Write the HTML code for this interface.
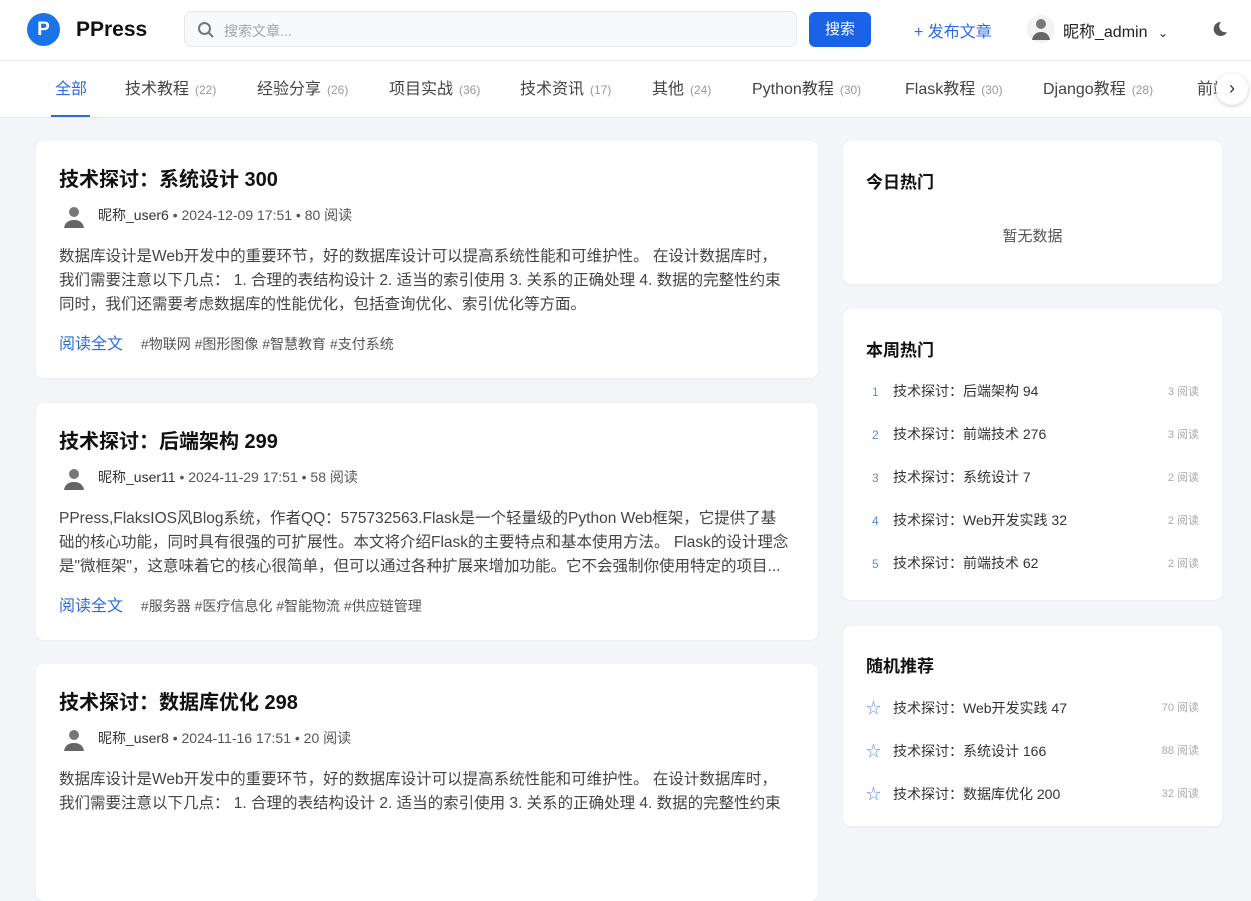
<!DOCTYPE html>
<html><head><meta charset="utf-8"><style>
*{box-sizing:border-box;margin:0;padding:0}
body{width:1251px;height:800px;overflow:hidden;background:#f3f5f8;font-family:"Liberation Sans","Noto Sans CJK SC",sans-serif;color:#1f2329}
.hdr{position:absolute;left:0;top:0;width:1251px;height:61px;background:#fff;border-bottom:1px solid #e8eaed}
.logo{position:absolute;left:27px;top:13px;width:33px;height:33px;border-radius:50%;background:#1a73e8;color:#fff;font-weight:bold;font-size:19px;text-align:center;line-height:33px}
.brand{position:absolute;left:76px;top:18px;font-size:21px;font-weight:bold;color:#111}
.search{position:absolute;left:184px;top:11px;width:613px;height:36px;border:1px solid #e6e8eb;border-radius:8px;background:#f8f9fb}
.search span{position:absolute;left:39px;top:9px;font-size:14px;color:#a0a4aa}
.btn{position:absolute;left:809px;top:12px;width:62px;height:35px;background:#1a62e6;border-radius:6px;color:#fff;font-size:15px;text-align:center;line-height:35px}
.pub{position:absolute;left:914px;top:18px;font-size:16px;color:#2b6de0}
.user{position:absolute;left:1063px;top:18px;font-size:16px;color:#222}
.tabs{position:absolute;left:0;top:61px;width:1251px;height:57px;background:#fff;border-bottom:1px solid #e8eaed}
.tab{position:absolute;top:14px;font-size:16px;color:#444;white-space:nowrap}
.tab small{font-size:12px;color:#999;margin-left:6px}
.card{position:absolute;background:#fff;border-radius:8px;box-shadow:0 1px 3px rgba(0,0,0,.04)}
.art{left:36px;width:782px;height:237px}
.art h2{position:absolute;left:23px;top:22px;font-size:20px;font-weight:bold;color:#111}
.meta{position:absolute;left:62px;top:64px;font-size:14px;color:#555}
.meta .n{color:#333}
.av{position:absolute;left:26px;top:63px;width:24px;height:26px}
.body{position:absolute;left:23px;top:104px;width:750px;font-size:15.5px;line-height:24px;color:#444;white-space:nowrap;overflow:hidden}
.ft{position:absolute;left:23px;top:189px;font-size:14px;color:#555}
.ft a{color:#2b6de0;font-size:16px;margin-right:14px}
.side{left:843px;width:379px}
.side h3{position:absolute;left:23px;top:27px;font-size:17px;font-weight:bold;color:#111}
.it{position:absolute;left:23px;width:333px;font-size:14px;color:#333}
.it .i{display:inline-block;width:27px;color:#5b8ad8;font-size:12px;padding-left:6px}
.it .r{position:absolute;right:0;top:2px;font-size:11px;color:#aaa}
</style></head><body>
<div class="hdr">
<div class="logo">P</div><div class="brand">PPress</div>
<div class="search"><svg style="position:absolute;left:12px;top:9px" width="18" height="18" viewBox="0 0 18 18"><circle cx="7.5" cy="7.5" r="5.5" fill="none" stroke="#777" stroke-width="2"/><path d="M11.5 11.5L16 16" stroke="#777" stroke-width="2"/></svg><span>搜索文章...</span></div>
<div class="btn">搜索</div>
<div class="pub">+ 发布文章</div>
<svg style="position:absolute;left:1027px;top:14px" width="28" height="30" viewBox="0 0 28 30"><circle cx="14" cy="15" r="14" fill="#f2f2f2"/><circle cx="14" cy="10" r="5" fill="#777"/><path d="M5 26c1-6 5-8 9-8s8 2 9 8z" fill="#666"/></svg>
<div class="user">昵称_admin <span style="font-size:12px;margin-left:6px">⌄</span></div>
<svg style="position:absolute;left:1210px;top:20px" width="18" height="18" viewBox="0 0 18 18"><path d="M11 2a7 7 0 1 0 6 10A6 6 0 0 1 11 2z" fill="#555"/></svg>
</div>
<div class="tabs">
<div class="tab" style="left:55px;color:#2b6de0">全部</div>
<div style="position:absolute;left:51px;top:54px;width:39px;height:2px;background:#2b6de0"></div>
<div class="tab" style="left:125px">技术教程<small>(22)</small></div>
<div class="tab" style="left:257px">经验分享<small>(26)</small></div>
<div class="tab" style="left:389px">项目实战<small>(36)</small></div>
<div class="tab" style="left:520px">技术资讯<small>(17)</small></div>
<div class="tab" style="left:652px">其他<small>(24)</small></div>
<div class="tab" style="left:752px">Python教程<small>(30)</small></div>
<div class="tab" style="left:905px">Flask教程<small>(30)</small></div>
<div class="tab" style="left:1043px">Django教程<small>(28)</small></div>
<div class="tab" style="left:1197px">前端</div>
<div style="position:absolute;left:1216px;top:12px;width:32px;height:32px;border-radius:50%;background:#fff;box-shadow:0 1px 4px rgba(0,0,0,.2);text-align:center;line-height:30px;font-size:18px;color:#333">›</div>
</div>

<div class="card art" style="top:141px">
<h2>技术探讨：系统设计 300</h2>
<svg class="av" viewBox="0 0 24 26"><circle cx="12" cy="8" r="5" fill="#777"/><path d="M2 24c1-6 5-8 10-8s9 2 10 8z" fill="#666"/></svg>
<div class="meta"><span class="n">昵称_user6</span> • 2024-12-09 17:51 • 80 阅读</div>
<div class="body">数据库设计是Web开发中的重要环节，好的数据库设计可以提高系统性能和可维护性。 在设计数据库时，<br>我们需要注意以下几点： 1. 合理的表结构设计 2. 适当的索引使用 3. 关系的正确处理 4. 数据的完整性约束<br>同时，我们还需要考虑数据库的性能优化，包括查询优化、索引优化等方面。</div>
<div class="ft"><a>阅读全文</a> #物联网 #图形图像 #智慧教育 #支付系统</div>
</div>
<div class="card art" style="top:403px">
<h2>技术探讨：后端架构 299</h2>
<svg class="av" viewBox="0 0 24 26"><circle cx="12" cy="8" r="5" fill="#777"/><path d="M2 24c1-6 5-8 10-8s9 2 10 8z" fill="#666"/></svg>
<div class="meta"><span class="n">昵称_user11</span> • 2024-11-29 17:51 • 58 阅读</div>
<div class="body">PPress,FlaksIOS风Blog系统，作者QQ：575732563.Flask是一个轻量级的Python Web框架，它提供了基<br>础的核心功能，同时具有很强的可扩展性。本文将介绍Flask的主要特点和基本使用方法。 Flask的设计理念<br>是"微框架"，这意味着它的核心很简单，但可以通过各种扩展来增加功能。它不会强制你使用特定的项目...</div>
<div class="ft"><a>阅读全文</a> #服务器 #医疗信息化 #智能物流 #供应链管理</div>
</div>
<div class="card art" style="top:664px">
<h2>技术探讨：数据库优化 298</h2>
<svg class="av" viewBox="0 0 24 26"><circle cx="12" cy="8" r="5" fill="#777"/><path d="M2 24c1-6 5-8 10-8s9 2 10 8z" fill="#666"/></svg>
<div class="meta"><span class="n">昵称_user8</span> • 2024-11-16 17:51 • 20 阅读</div>
<div class="body">数据库设计是Web开发中的重要环节，好的数据库设计可以提高系统性能和可维护性。 在设计数据库时，<br>我们需要注意以下几点： 1. 合理的表结构设计 2. 适当的索引使用 3. 关系的正确处理 4. 数据的完整性约束</div>
</div>

<div class="card side" style="top:141px;height:143px">
<h3>今日热门</h3>
<div style="position:absolute;top:84px;width:100%;text-align:center;font-size:15px;color:#555">暂无数据</div>
</div>
<div class="card side" style="top:309px;height:291px">
<h3>本周热门</h3>
<div class="it" style="top:72px"><span class="i">1</span>技术探讨：后端架构 94<span class="r">3 阅读</span></div>
<div class="it" style="top:115px"><span class="i">2</span>技术探讨：前端技术 276<span class="r">3 阅读</span></div>
<div class="it" style="top:158px"><span class="i">3</span>技术探讨：系统设计 7<span class="r">2 阅读</span></div>
<div class="it" style="top:201px"><span class="i">4</span>技术探讨：Web开发实践 32<span class="r">2 阅读</span></div>
<div class="it" style="top:244px"><span class="i">5</span>技术探讨：前端技术 62<span class="r">2 阅读</span></div>
</div>
<div class="card side" style="top:626px;height:200px">
<h3 style="top:26px">随机推荐</h3>
<div class="it" style="top:71px"><span class="i" style="padding-left:0;font-size:15px">☆</span>技术探讨：Web开发实践 47<span class="r">70 阅读</span></div>
<div class="it" style="top:114px"><span class="i" style="padding-left:0;font-size:15px">☆</span>技术探讨：系统设计 166<span class="r">88 阅读</span></div>
<div class="it" style="top:157px"><span class="i" style="padding-left:0;font-size:15px">☆</span>技术探讨：数据库优化 200<span class="r">32 阅读</span></div>
</div>
</body></html>
